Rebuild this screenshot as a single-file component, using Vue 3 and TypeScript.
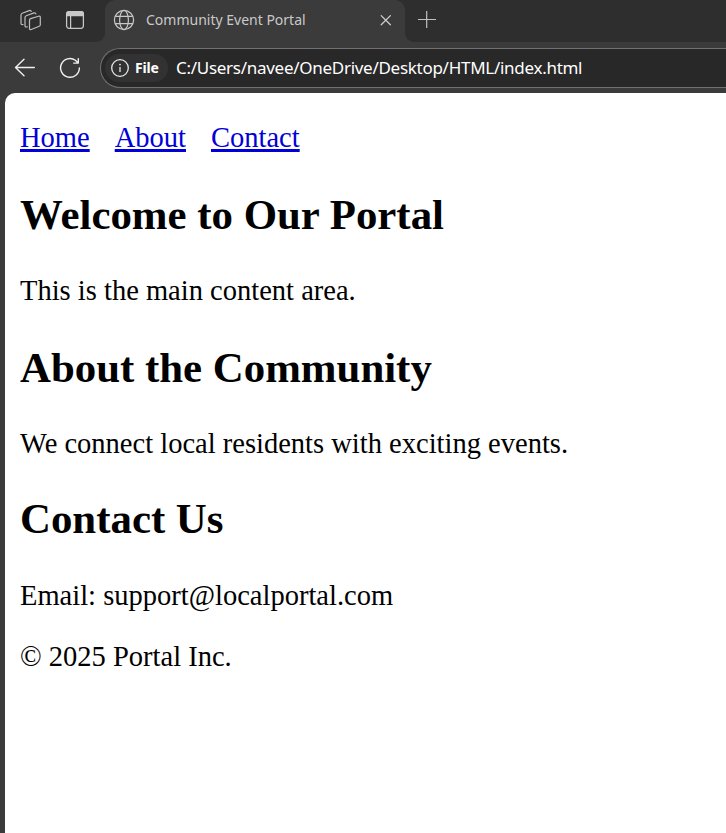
<script setup lang="ts">
interface NavLink {
  label: string
  target: string
}

interface Section {
  id: string
  title: string
  text: string
}

const links: NavLink[] = [
  { label: 'Home', target: '#home' },
  { label: 'About', target: '#about' },
  { label: 'Contact', target: '#contact' },
]

const sections: Section[] = [
  { id: 'home', title: 'Welcome to Our Portal', text: 'This is the main content area.' },
  { id: 'about', title: 'About the Community', text: 'We connect local residents with exciting events.' },
  { id: 'contact', title: 'Contact Us', text: 'Email: support@localportal.com' },
]
</script>

<template>
  <div class="window">
    <header class="tab-strip">
      <div class="strip-left">
        <svg class="workspaces" width="22" height="22" viewBox="0 0 22 22" fill="none" stroke="#bdbdbd" stroke-width="1.2" stroke-linejoin="round" stroke-linecap="round">
          <path d="M10.6 9.6 18.6 7.2Q20.3 6.8 20.3 8.3V15.7Q20.3 16.9 19.2 17.3L11.2 20.5Q9.5 21 9.5 19.5V11.2Q9.5 10 10.6 9.6Z" />
          <path d="M7.3 17.9 6.2 18Q5 18.1 5 16.8V8.5Q5 7.2 6.2 6.7L14 3.9Q15.5 3.5 15.9 4.9" />
          <path d="M3.1 15.5 2.2 15.6Q1 15.6 1 14.3V6Q1 4.7 2.2 4.2L9.2 1.6Q10.8 1.1 11.2 2.5" />
        </svg>
        <svg class="tab-menu" width="20" height="20" viewBox="0 0 20 20" fill="none" stroke="#c8c8c8" stroke-width="1.25">
          <rect x="1.6" y="1.7" width="16.8" height="16.6" rx="2.5" />
          <path d="M1.6 5.5V4Q1.6 1.7 4 1.7H16Q18.4 1.7 18.4 4V5.5Z" fill="#c8c8c8" />
          <path d="M5.6 6V18" />
        </svg>
      </div>
      <div class="tab">
        <svg width="22" height="22" viewBox="0 0 22 22" fill="none" stroke="#c8c8c8" stroke-width="1.2">
          <circle cx="11" cy="11" r="9.6" />
          <ellipse cx="11" cy="11" rx="4.4" ry="9.6" />
          <path d="M2.3 7.4H19.7M2.3 14.6H19.7" />
        </svg>
        <span class="tab-title">Community Event Portal</span>
        <svg class="close" width="12" height="12" viewBox="0 0 12 12" fill="none" stroke="#d0d0d0" stroke-width="1.25" stroke-linecap="round">
          <path d="M1.2 1.6 10.4 10.8M10.4 1.6 1.2 10.8" />
        </svg>
      </div>
      <div class="strip-right">
        <svg width="18" height="18" viewBox="0 0 18 18" fill="none" stroke="#c0c0c0" stroke-width="1.2">
          <path d="M0 8.5H18M8.7 0V17" />
        </svg>
      </div>
    </header>

    <div class="toolbar">
      <svg class="back" width="22" height="20" viewBox="0 0 22 20" fill="none" stroke="#f0f0f0" stroke-width="1.4" stroke-linecap="round" stroke-linejoin="round">
        <path d="M20.3 9.5H1.5M10 1.2 1.5 9.5 10 17.8" />
      </svg>
      <svg class="reload" width="22" height="22" viewBox="0 0 22 22" fill="none" stroke="#f0f0f0" stroke-width="1.4" stroke-linecap="round" stroke-linejoin="round">
        <path d="M20.4 11A9.4 9.4 0 1 1 16.4 3.2L19.2 5.9M19.3 1.6V6.1H14.7" />
      </svg>
      <div class="address">
        <div class="chip">
          <svg width="20" height="20" viewBox="0 0 20 20" fill="none" stroke="#e8e8e8" stroke-width="1.3">
            <circle cx="10" cy="10" r="8.3" />
            <path d="M10 9V14" />
            <circle cx="10" cy="6.6" r=".9" fill="#e8e8e8" stroke="none" />
          </svg>
          <span class="scheme">File</span>
        </div>
        <span class="url">C:/Users/navee/OneDrive/Desktop/HTML/index.html</span>
      </div>
    </div>

    <main class="page">
      <nav class="nav">
        <a v-for="link in links" :key="link.target" :href="link.target">{{ link.label }}</a>
      </nav>
      <section v-for="section in sections" :id="section.id" :key="section.id" :class="section.id">
        <h2>{{ section.title }}</h2>
        <p>{{ section.text }}</p>
      </section>
      <footer>© 2025 Portal Inc.</footer>
    </main>
  </div>
</template>

<style>
body {
  margin: 0;
  overflow: hidden;
}
</style>

<style scoped>
.window {
  box-sizing: border-box;
  display: flex;
  flex-direction: column;
  height: 833px;
  overflow: hidden;
  background: #3b3b3b;
  font-family: 'Noto Sans', 'Open Sans', sans-serif;
}

svg {
  display: block;
  flex: none;
}

.tab-strip {
  display: flex;
  flex: none;
  height: 42px;
}

.strip-left,
.strip-right {
  box-sizing: border-box;
  display: flex;
  background: #2e2e2e;
}

.strip-left {
  width: 105px;
  padding: 9px 0 0 20px;
  gap: 23px;
  border-bottom-right-radius: 9px;
}

.tab-menu {
  margin-top: 1px;
}

.strip-right {
  flex: 1;
  padding: 11px 0 0 13px;
  border-bottom-left-radius: 9px;
}

.tab {
  box-sizing: border-box;
  display: flex;
  align-items: center;
  width: 300px;
  padding: 0 13px 2px 8px;
  background:
    radial-gradient(circle at 10px 10px, #3b3b3b 9.5px, #2e2e2e 10px) left top / 10px 10px no-repeat,
    radial-gradient(circle at 0 10px, #3b3b3b 9.5px, #2e2e2e 10px) right top / 10px 10px no-repeat;
}

.tab-title {
  margin-left: 11px;
  padding-bottom: 2px;
  color: #c9c9c9;
  font-size: 14px;
  white-space: nowrap;
}

.close {
  margin-left: auto;
}

.toolbar {
  display: flex;
  align-items: center;
  flex: none;
  height: 51px;
}

.back {
  margin-left: 14px;
}

.reload {
  margin-left: 23px;
}

.address {
  box-sizing: border-box;
  display: flex;
  align-items: center;
  flex: 1;
  height: 40px;
  margin-left: 19px;
  padding-left: 4px;
  border: 1px solid #717171;
  border-right: 0;
  border-radius: 20px 0 0 20px;
  background: #282828;
}

.chip {
  box-sizing: border-box;
  display: flex;
  align-items: center;
  width: 63px;
  height: 28px;
  padding-left: 5px;
  gap: 5px;
  border-radius: 14px;
  background: #323232;
}

.scheme {
  color: #fff;
  font-size: 14px;
  font-weight: 700;
  letter-spacing: -0.2px;
}

.url {
  margin-left: 8px;
  color: #fff;
  font-size: 17px;
  letter-spacing: -0.28px;
  white-space: nowrap;
}

.page {
  flex: 1;
  margin-left: 5px;
  padding: 29px 0 0 15px;
  border-top-left-radius: 10px;
  background: #fff;
  color: #000;
  font-family: 'Liberation Serif', serif;
  font-size: 28.53px;
  line-height: 31px;
}

.nav {
  display: flex;
  gap: 25px;
  margin-bottom: 38px;
}

.nav a {
  color: #0000d8;
  text-decoration-thickness: 3px;
  text-underline-offset: 2px;
  text-decoration-skip-ink: none;
}

h2 {
  margin: 0 0 37px;
  font-size: 42.85px;
  line-height: 47px;
}

p {
  margin: 0 0 38px;
}

.about p {
  margin-bottom: 36px;
}

.contact h2 {
  margin-bottom: 38px;
}

.contact p {
  margin-bottom: 30px;
}
</style>
